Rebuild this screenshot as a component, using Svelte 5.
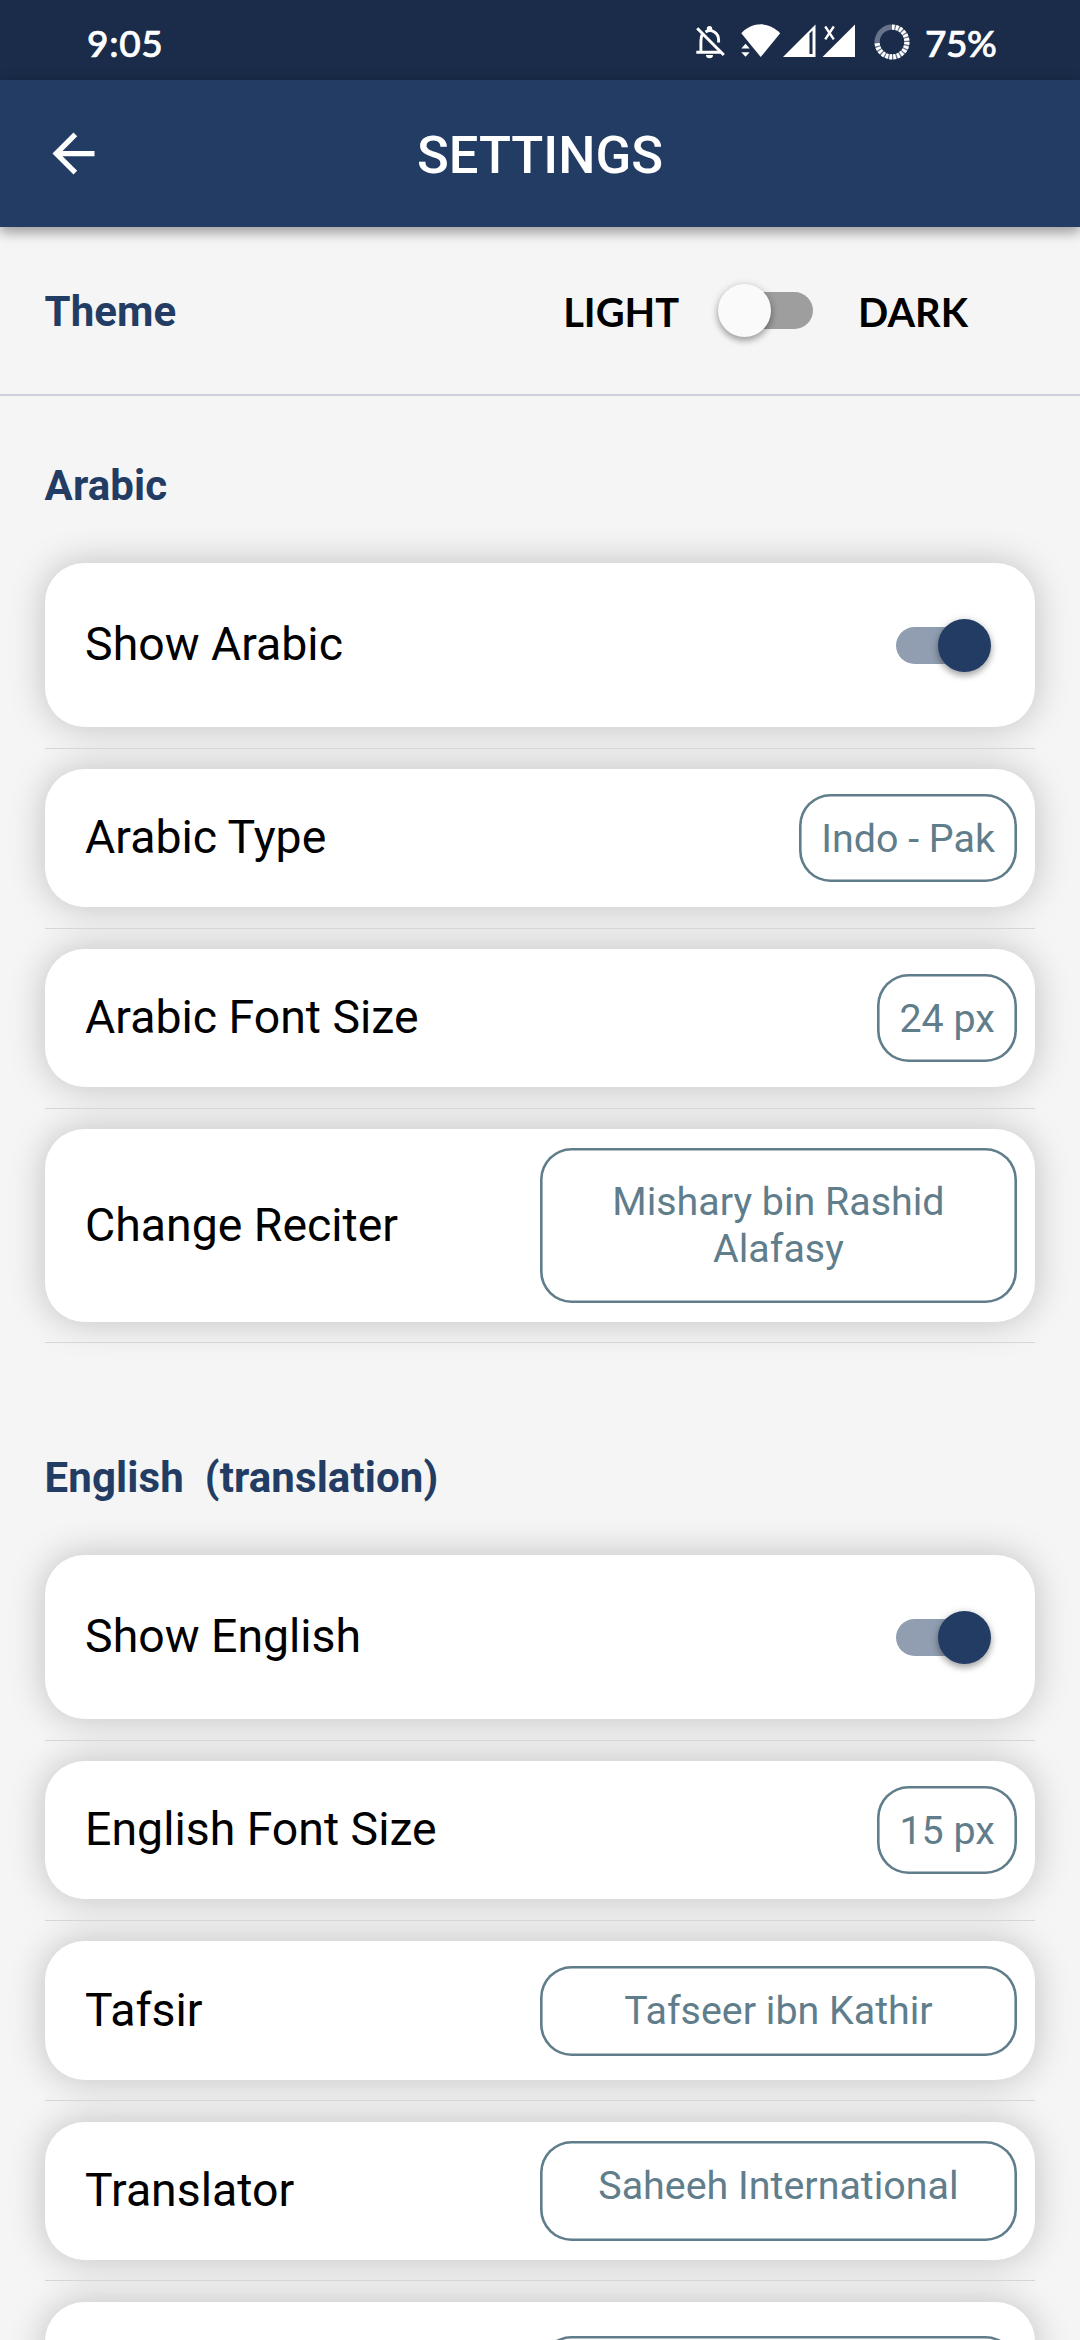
<script>
  const sections = [
    {
      id: 'arabic',
      title: 'Arabic',
      rows: [
        { label: 'Show Arabic', kind: 'switch' },
        { label: 'Arabic Type', kind: 'chip', value: 'Indo - Pak' },
        { label: 'Arabic Font Size', kind: 'chip', value: '24 px' },
        { label: 'Change Reciter', kind: 'wide', size: 'tall', value: 'Mishary bin Rashid Alafasy' }
      ]
    },
    {
      id: 'english',
      title: 'English  (translation)',
      rows: [
        { label: 'Show English', kind: 'switch' },
        { label: 'English Font Size', kind: 'chip', value: '15 px' },
        { label: 'Tafsir', kind: 'wide', size: 'single', value: 'Tafseer ibn Kathir' },
        { label: 'Translator', kind: 'wide', size: 'roomy', value: 'Saheeh International' },
        { label: '', kind: 'wide', size: 'cut', value: '' }
      ]
    }
  ];
</script>

<div class="screen">
  <div class="status">
    <span class="clock">9:05</span>
    <div class="tray">
      <svg class="bell" width="30" height="36" viewBox="0 0 30 36" fill="none" stroke="#fff" stroke-width="2.9">
        <path d="M1.2 4.2 27.8 31" stroke-width="3" />
        <path d="M6.2 10.5C5 13 4.900 15 4.900 17.500V27.500M0.300 28.300H25" />
        <path d="M9.500 8C15.500 4.200 22.600 9 22.600 16V18.500" />
        <path d="M10.800 7V4.800a2.700 2.700 0 0 1 5.400 0V7zM10 31h7a3.500 3.200 0 0 1-7 0z" fill="#fff" stroke="none" />
      </svg>
      <svg class="wifi" width="40" height="34" viewBox="0 0 40 34" fill="#fff">
        <path d="M0.300 9.200C11.500-2.600 28-2.600 39.200 9.200L19.700 33z" />
        <path d="M0.300 24.500 4.500 19.800 8.700 24.500zM0.300 28.200 4.500 32.800 8.700 28.200z" />
      </svg>
      <svg class="signal" width="33" height="34" viewBox="0 0 33 34">
        <path d="M0 33 32.500 0.500V33z" fill="#fff" />
        <path d="M26.500 9.500 29.500 6.500V30H26.500z" fill="#1a2c4a" />
      </svg>
      <svg class="signal second" width="34" height="34" viewBox="0 0 34 34">
        <path d="M0.500 33 33 0.500V33z" fill="#fff" />
        <path d="M3.200 2.500 11.800 15.300M11.800 2.500 3.200 15.300" stroke="#fff" stroke-width="2.400" />
      </svg>
      <svg class="battery" width="36" height="36" viewBox="0 0 36 36" fill="none" stroke-width="5.200">
        <circle cx="18" cy="18" r="14.900" stroke="#66738a" />
        <circle
          cx="18"
          cy="18"
          r="14.900"
          stroke="#fff"
          pathLength="96"
          stroke-dasharray="2.700 1.300 2.700 1.300 2.700 1.300 2.700 1.300 2.700 1.300 2.700 1.300 2.700 1.300 2.700 1.300 2.700 1.300 2.700 1.300 2.700 1.300 2.700 1.300 2.700 1.300 2.700 1.300 2.700 1.300 2.700 1.300 2.700 1.300 2.700 25.300"
          transform="rotate(-90 18 18)"
        />
      </svg>
      <span class="percent">75%</span>
    </div>
  </div>

  <header class="appbar">
    <svg class="back" width="63" height="63" viewBox="0 0 24 24" fill="#fff">
      <path d="M20 11H7.830l5.590-5.590L12 4l-8 8 8 8 1.410-1.410L7.830 13H20v-2z" />
    </svg>
    <h1>SETTINGS</h1>
  </header>

  <div class="theme">
    <h2>Theme</h2>
    <div class="theme-choice">
      <span class="mode">LIGHT</span>
      <div class="switch off"><i class="thumb"></i></div>
      <span class="mode">DARK</span>
    </div>
  </div>

  {#each sections as section (section.id)}
    <section>
      <h2 class="heading {section.id}">{section.title}</h2>
      {#each section.rows as row}
        <div class="card {row.kind === 'switch' ? 'toggle' : row.kind} {row.size ?? ''}">
          <span class="label">{row.label}</span>
          {#if row.kind === 'switch'}
            <div class="switch on"><i class="thumb"></i></div>
          {:else}
            <button class="value">{row.value}</button>
          {/if}
        </div>
        <div class="rule"></div>
      {/each}
    </section>
  {/each}
</div>

<style>
  :global(body) {
    background: #f5f5f5;
  }
  .screen {
    width: 1080px;
    height: 2340px;
    overflow: hidden;
    background: #f5f5f5;
    font-family: Roboto, 'Liberation Sans', sans-serif;
    color: #000;
    display: flex;
    flex-direction: column;
  }
  .screen > * {
    flex: none;
  }
  .status {
    box-sizing: border-box;
    height: 80px;
    padding: 0 84px 0 87px;
    background: #1a2c4a;
    color: #fff;
    display: flex;
    justify-content: space-between;
    font-family: Lato, Roboto, sans-serif;
    font-size: 37px;
    font-weight: 500;
    line-height: 86px;
    -webkit-text-stroke: 0.7px #fff;
  }
  .clock {
    letter-spacing: 0.7px;
  }
  .tray {
    display: flex;
  }
  .tray svg {
    display: block;
    margin-top: 24px;
  }
  .bell {
    margin-right: 15px;
  }
  .wifi {
    margin-right: 2px;
  }
  .signal {
    margin-right: 6px;
  }
  .signal.second {
    margin-right: 18px;
  }
  .percent {
    width: 71px;
    margin-left: 15px;
    letter-spacing: -0.500px;
    white-space: nowrap;
  }
  .appbar {
    position: relative;
    z-index: 1;
    height: 147px;
    background: #233c63;
    color: #fff;
    display: grid;
    grid-template-columns: 105px 1fr 105px;
    align-items: center;
    box-shadow: 0 4px 14px rgba(0, 0, 0, 0.28), 0 6px 10px rgba(0, 0, 0, 0.14);
  }
  .back {
    margin-left: 42px;
  }
  h1 {
    margin: 0;
    padding-top: 2px;
    text-align: center;
    font-size: 52.500px;
    font-weight: 500;
    line-height: 62px;
  }
  h2 {
    margin: 0;
    color: #233c63;
    font-size: 42px;
    font-weight: 700;
    line-height: 50px;
    letter-spacing: 0.100px;
    white-space: pre;
  }
  .theme {
    box-sizing: border-box;
    height: 169px;
    padding: 0 112px 0 44.600px;
    border-bottom: 2px solid #cbd0db;
    display: flex;
    align-items: center;
    justify-content: space-between;
  }
  .theme h2 {
    padding-top: 2px;
  }
  .theme-choice {
    display: flex;
    align-items: center;
  }
  .mode {
    padding-top: 2px;
    font-family: Lato, sans-serif;
    font-size: 39.800px;
    font-weight: 700;
    line-height: 48px;
  }
  .switch {
    position: relative;
    width: 87px;
    height: 37px;
    border-radius: 19px;
  }
  .switch.off {
    background: #9e9e9e;
    margin: 0 45px 0 47px;
  }
  .switch.on {
    background: #919eb1;
    margin-right: 52px;
  }
  .thumb {
    position: absolute;
    top: -8px;
    left: -8px;
    width: 53px;
    height: 53px;
    border-radius: 50%;
    background: #fafafa;
    box-shadow: 0 4px 6px rgba(0, 0, 0, 0.26), 0 1px 8px rgba(0, 0, 0, 0.18);
  }
  .on .thumb {
    left: 42px;
    background: #233c63;
  }
  section {
    padding: 0 44.600px;
  }
  .heading {
    box-sizing: border-box;
    padding-top: 65px;
    height: 167px;
  }
  .heading.english {
    padding-top: 89px;
    height: 191.300px;
  }
  .card {
    box-sizing: border-box;
    height: 138.200px;
    padding: 0 18.500px 0 40.500px;
    border-radius: 39.400px;
    background: #fff;
    box-shadow: 0 0 36px rgba(0, 0, 0, 0.22);
    display: flex;
    align-items: center;
    justify-content: space-between;
  }
  .card.toggle {
    height: 164px;
    padding-right: 0;
  }
  .card.tall {
    height: 192.600px;
  }
  .label {
    padding-bottom: 2px;
    font-size: 46.400px;
    line-height: 54px;
  }
  .value {
    box-sizing: border-box;
    height: 88px;
    margin: 0;
    padding: 1px 22px 0;
    border: 0;
    border-radius: 31.500px;
    background: transparent;
    box-shadow: inset 0 0 0 2.600px #607d8b;
    color: #607d8b;
    font: 400 39.400px/47px Roboto, sans-serif;
    text-align: center;
  }
  .wide .value {
    width: 477px;
    padding: 0 40px;
  }
  .single .value {
    height: 90px;
  }
  .roomy .value {
    height: 100px;
    padding-bottom: 10px;
  }
  .tall .value {
    height: 155px;
    padding-bottom: 1px;
  }
  .cut {
    align-items: flex-start;
    padding-top: 34px;
  }
  .rule {
    height: 42px;
    display: flex;
    align-items: center;
  }
  .rule::before {
    content: '';
    flex: 1;
    height: 1px;
    background: #d6d6d6;
  }
</style>
